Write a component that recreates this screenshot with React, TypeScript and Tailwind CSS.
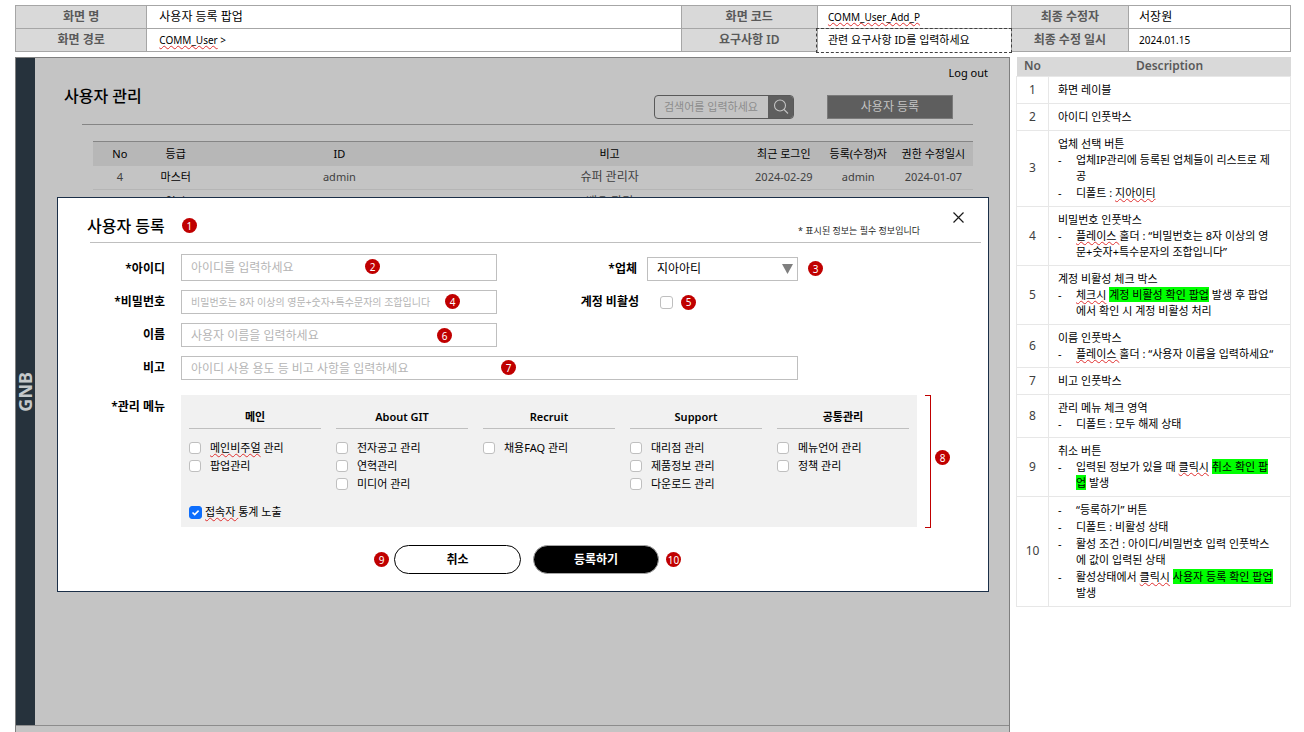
import React from "react";

function Badge({ n, className = "" }: { n: number; className?: string }) {
  return (
    <span
      className={`flex h-[15px] w-[15px] shrink-0 items-center justify-center rounded-full bg-[#c00000] text-[10px] leading-[14px] text-white ${className}`}
    >
      {n}
    </span>
  );
}

function Typo({ children }: { children: React.ReactNode }) {
  return (
    <span className="underline decoration-[#e03030] decoration-wavy decoration-1 underline-offset-1 [text-decoration-skip-ink:none]">
      {children}
    </span>
  );
}

function Mark({ children }: { children: React.ReactNode }) {
  return <mark className="bg-[#00ff00] text-black">{children}</mark>;
}

const metaLabel =
  "border border-[#a6a6a6] bg-[#d9d9d9] p-0 text-center text-[12px] font-semibold text-[#595959]";
const metaValue = "border border-[#a6a6a6] py-0 pr-0 text-left font-normal";

function MetaTable() {
  return (
    <table className="w-full table-fixed border-collapse leading-[16px]">
      <colgroup>
        <col className="w-[10.3%]" />
        <col className="w-[41.9%]" />
        <col className="w-[10.7%]" />
        <col className="w-[15.2%]" />
        <col className="w-[9.2%]" />
        <col className="w-[12.7%]" />
      </colgroup>
      <tbody>
        <tr className="h-[23px]">
          <th className={metaLabel}>화면 명</th>
          <td className={`${metaValue} pl-3 text-[12px]`}>사용자 등록 팝업</td>
          <th className={metaLabel}>화면 코드</th>
          <td className={`${metaValue} pl-[10px] text-[10px]`}>
            <Typo>COMM_User_Add_P</Typo>
          </td>
          <th className={metaLabel}>최종 수정자</th>
          <td className={`${metaValue} pl-[10px] text-[12px]`}>서장원</td>
        </tr>
        <tr className="h-[23px]">
          <th className={metaLabel}>화면 경로</th>
          <td className={`${metaValue} pl-3 text-[10px]`}>
            <Typo>COMM_User</Typo> &gt;
          </td>
          <th className={metaLabel}>요구사항 ID</th>
          <td className="bg-white py-0 pl-[10px] text-[11px] outline outline-1 outline-dashed outline-[#404040]">
            관련 요구사항 ID를 입력하세요
          </td>
          <th className={metaLabel}>최종 수정 일시</th>
          <td className={`${metaValue} pl-[10px] text-[10px]`}>2024.01.15</td>
        </tr>
      </tbody>
    </table>
  );
}

const users = [
  ["4", "마스터", "admin", "슈퍼 관리자", "2024-02-29", "admin", "2024-01-07"],
  ["3", "일반", "user", "배우 관리", "", "admin", ""],
];

function UserListPage() {
  return (
    <div className="min-w-0 flex-1">
      <div className="flex justify-end pt-[7px] pr-[21px]">
        <a href="#logout" className="text-[11px] leading-[16px] text-black">
          Log out
        </a>
      </div>
      <div className="flex h-[43px] items-end pr-[56px] pl-[29px]">
        <h1 className="flex-1 pb-[18px] text-[16px] leading-[20px] font-medium">사용자 관리</h1>
        <div className="mb-[5px] flex h-6 w-[140px] overflow-hidden rounded-[4px] border border-[#595959]">
          <input
            aria-label="검색어"
            placeholder="검색어를 입력하세요"
            className="min-w-0 flex-1 bg-transparent pl-[9px] text-[11px] outline-none placeholder:text-[#8c8c8c]"
          />
          <button aria-label="검색" className="flex w-[25px] items-center justify-center bg-[#5e5e5e]">
            <svg width="16" height="16" viewBox="0 0 16 16" fill="none" stroke="#c4c4c4" strokeWidth="1.1">
              <circle cx="7" cy="6.5" r="5.5" />
              <path d="M11 10.5L15 14.5" />
            </svg>
          </button>
        </div>
        <button className="mb-[5px] ml-[33px] h-6 w-[126px] border border-[#7a7a7a] bg-[#5e5e5e] text-[12px] text-[#c4c4c4]">
          사용자 등록
        </button>
      </div>
      <div className="mr-9 ml-[47px] border-t border-[#858585]" />
      <div className="mt-4 mr-9 ml-[58px]">
        <table className="w-full table-fixed border-collapse text-center text-[11px] leading-[16px]">
          <colgroup>
            <col className="w-[6.1%]" />
            <col className="w-[6.6%]" />
            <col className="w-[30.6%]" />
            <col className="w-[30.8%]" />
            <col className="w-[8.8%]" />
            <col className="w-[8.1%]" />
            <col className="w-[9%]" />
          </colgroup>
          <thead>
            <tr className="h-6 border-t border-[#858585] bg-[#b7b7b7] text-black">
              {["No", "등급", "ID", "비고", "최근 로그인", "등록(수정)자", "권한 수정일시"].map((h) => (
                <th key={h} className="p-0 font-normal whitespace-nowrap">
                  {h}
                </th>
              ))}
            </tr>
          </thead>
          <tbody>
            {users.map((row) => (
              <tr key={row[0]} className="h-6 border-b border-[#b5b5b5] text-[#404040]">
                {row.map((cell, i) => (
                  <td
                    key={i}
                    className={
                      i === 1 ? "p-0 whitespace-nowrap text-black" : i === 3 ? "p-0 text-[12px] whitespace-nowrap" : "p-0 whitespace-nowrap"
                    }
                  >
                    {cell}
                  </td>
                ))}
              </tr>
            ))}
          </tbody>
        </table>
      </div>
    </div>
  );
}

const labelCls = "w-[107px] shrink-0 text-right text-[12px] leading-[16px] font-semibold";
const inputCls =
  "w-full border border-[#bfbfbf] bg-white pl-[9px] outline-none placeholder:text-[#b5b5b5]";
const checkCls =
  "shrink-0 appearance-none rounded-[3px] border border-[#bfbfbf] bg-white checked:border-[#0d6efd] checked:bg-[#0d6efd]";

const menus: { title: string; items: React.ReactNode[] }[] = [
  { title: "메인", items: [<><Typo>메인비주얼</Typo> 관리</>, "팝업관리"] },
  { title: "About GIT", items: ["전자공고 관리", "연혁관리", "미디어 관리"] },
  { title: "Recruit", items: ["채용FAQ 관리"] },
  { title: "Support", items: ["대리점 관리", "제품정보 관리", "다운로드 관리"] },
  { title: "공통관리", items: ["메뉴언어 관리", "정책 관리"] },
];

function MenuPermissions() {
  return (
    <div className="relative h-[132px] min-w-0 flex-1 bg-[#f1f1f1] px-2 pt-3">
      <div className="grid h-[97px] grid-cols-5 gap-[15px]">
        {menus.map((m) => (
          <fieldset key={m.title} className="min-w-0">
            <legend className="mb-[11px] block w-full border-b border-[#bfbfbf] pt-[2px] pb-[3px] text-center text-[11px] leading-[16px] font-semibold">
              {m.title}
            </legend>
            <div className="flex flex-col gap-[2px]">
              {m.items.map((item, i) => (
                <label key={i} className="flex items-center gap-[9px] text-[11px] leading-[16px] whitespace-nowrap">
                  <input type="checkbox" className={`${checkCls} h-3 w-3`} />
                  <span>{item}</span>
                </label>
              ))}
            </div>
          </fieldset>
        ))}
      </div>
      <label className="flex items-center gap-[3px] text-[11px] leading-[16px]">
        <span className="relative flex">
          <input type="checkbox" defaultChecked className={`${checkCls} h-[13px] w-[13px]`} />
          <svg className="pointer-events-none absolute inset-0" width="13" height="13" viewBox="0 0 13 13" fill="none" stroke="white" strokeWidth="1.6">
            <path d="M3.5 6.5L5.7 8.6L9.6 4.6" />
          </svg>
        </span>
        <span>
          <Typo>접속자 </Typo>통계 노출
        </span>
      </label>
      <span className="absolute top-0 -right-[14px] h-[133px] w-[6px] border border-l-0 border-[#c00000]" />
      <Badge n={8} className="absolute top-[55px] -right-[33px]" />
    </div>
  );
}

function RegisterDialog() {
  return (
    <div
      role="dialog"
      aria-labelledby="dialog-title"
      className="absolute top-[139px] right-5 left-[41px] border border-[#1b2f48] bg-white pb-[17px]"
    >
      <header className="mr-[7px] ml-8 flex h-[45px] items-start border-b border-[#bfbfbf]">
        <h2 id="dialog-title" className="-ml-[3px] pt-[18px] text-[16px] leading-[20px] font-medium">
          사용자 등록
        </h2>
        <Badge n={1} className="mt-5 ml-[17px]" />
        <p className="ml-auto pt-[26px] text-[9px] leading-[13px] text-[#262626]">* 표시된 정보는 필수 정보입니다</p>
        <button aria-label="닫기" className="mt-[14px] mr-[17px] ml-[33px]">
          <svg width="11" height="11" viewBox="0 0 11 11" stroke="#1a1a1a" strokeWidth="1.2">
            <path d="M0.5 0.5L10.5 10.5M10.5 0.5L0.5 10.5" />
          </svg>
        </button>
      </header>

      <form className="mt-[11px]" onSubmit={(e) => e.preventDefault()}>
        <div className="mr-[190px] flex flex-col gap-[9px]">
          <div className="flex items-end gap-4">
            <label htmlFor="uid" className={`${labelCls} pb-1`}>*아이디</label>
            <div className="relative flex-1">
              <input id="uid" placeholder="아이디를 입력하세요" className={`${inputCls} block h-[27px] text-[12px]`} />
              <Badge n={2} className="absolute top-[5px] right-[117px]" />
            </div>
            <div className="-ml-4 flex w-[301px] items-center gap-[10px]">
              <label htmlFor="company" className="flex-1 text-right text-[12px] leading-[16px] font-semibold">*업체</label>
              <div className="relative w-[151px]">
                <select id="company" className="block h-6 w-full appearance-none border border-[#bfbfbf] bg-white pl-[9px] text-[12px] outline-none">
                  <option>지아아티</option>
                </select>
                <svg className="pointer-events-none absolute top-[7px] right-[5px]" width="11" height="10" viewBox="0 0 11 10" fill="#7f7f7f">
                  <path d="M0 0H11L5.5 10Z" />
                </svg>
                <Badge n={3} className="absolute top-1 -right-[25px]" />
              </div>
            </div>
          </div>
          <div className="flex items-center gap-4">
            <label htmlFor="pw" className={labelCls}>*비밀번호</label>
            <div className="relative flex-1">
              <input
                id="pw"
                type="text"
                placeholder="비밀번호는 8자 이상의 영문+숫자+특수문자의 조합입니다"
                className={`${inputCls} block h-6 text-[10px]`}
              />
              <Badge n={4} className="absolute top-1 right-[37px]" />
            </div>
            <div className="-ml-4 flex w-[301px] items-center">
              <label htmlFor="inactive" className="w-[142px] text-right text-[12px] leading-[16px] font-semibold">계정 비활성</label>
              <input id="inactive" type="checkbox" className={`${checkCls} ml-[21px] h-[13px] w-[13px]`} />
              <Badge n={5} className="ml-2" />
            </div>
          </div>
          <div className="flex items-center gap-4">
            <label htmlFor="name" className={labelCls}>이름</label>
            <div className="relative mr-[301px] flex-1">
              <input id="name" placeholder="사용자 이름을 입력하세요" className={`${inputCls} block h-6 text-[12px]`} />
              <Badge n={6} className="absolute top-[5px] right-[45px]" />
            </div>
          </div>
          <div className="flex items-center gap-4">
            <label htmlFor="memo" className={labelCls}>비고</label>
            <div className="relative flex-1">
              <input id="memo" placeholder="아이디 사용 용도 등 비고 사항을 입력하세요" className={`${inputCls} block h-6 text-[12px]`} />
              <Badge n={7} className="absolute top-1 left-[320px]" />
            </div>
          </div>
        </div>

        <div className="mt-[15px] mr-[71px] flex items-start gap-4">
          <span className={`${labelCls} pt-1`}>*관리 메뉴</span>
          <MenuPermissions />
        </div>

        <div className="mt-[18px] flex items-center justify-center pl-[9px] text-[12px] font-semibold">
          <Badge n={9} className="mr-[5px] font-normal" />
          <button type="button" className="h-[29px] w-[127px] rounded-full border border-black bg-white">취소</button>
          <button type="submit" className="ml-3 h-[29px] w-[126px] rounded-full border border-[#a6a6a6] bg-black text-white">등록하기</button>
          <Badge n={10} className="ml-[7px] font-normal" />
        </div>
      </form>
    </div>
  );
}

const notes: { title?: string; items?: React.ReactNode[] }[] = [
  { title: "화면 레이블" },
  { title: "아이디 인풋박스" },
  {
    title: "업체 선택 버튼",
    items: ["업체IP관리에 등록된 업체들이 리스트로 제공", <>디폴트 : <Typo>지아이티</Typo></>],
  },
  {
    title: "비밀번호 인풋박스",
    items: [<><Typo>플레이스 </Typo>홀더 : “비밀번호는 8자 이상의 영문+숫자+특수문자의 조합입니다”</>],
  },
  {
    title: "계정 비활성 체크 박스",
    items: [<><Typo>체크시</Typo> <Mark>계정 비활성 확인 팝업</Mark> 발생 후 팝업에서 확인 시 계정 비활성 처리</>],
  },
  { title: "이름 인풋박스", items: [<><Typo>플레이스 </Typo>홀더 : “사용자 이름을 입력하세요“</>] },
  { title: "비고 인풋박스" },
  { title: "관리 메뉴 체크 영역", items: ["디폴트 : 모두 해제 상태"] },
  {
    title: "취소 버튼",
    items: [<>입력된 정보가 있을 때 <Typo>클릭시</Typo> <Mark>취소 확인 팝업</Mark> 발생</>],
  },
  {
    items: [
      "“등록하기” 버튼",
      "디폴트 : 비활성 상태",
      "활성 조건 : 아이디/비밀번호 입력 인풋박스에 값이 입력된 상태",
      <>활성상태에서 <Typo>클릭시</Typo> <Mark>사용자 등록 확인 팝업</Mark> 발생</>,
    ],
  },
];

function DescriptionTable() {
  return (
    <table className="w-full table-fixed border-collapse text-[11px] leading-[16px]">
      <thead>
        <tr className="h-[19px] bg-[#d9d9d9] text-[12px] text-[#595959]">
          <th className="w-8 p-0 font-semibold">No</th>
          <th className="p-0 font-semibold">Description</th>
        </tr>
      </thead>
      <tbody>
        {notes.map((note, i) => (
          <tr key={i}>
            <td className="border border-[#e7e7e7] p-0 text-center text-[12px] text-[#404040]">{i + 1}</td>
            <td className="border border-[#e7e7e7] py-[5px] pr-[13px] pl-[9px] break-all">
              {note.title && <p>{note.title}</p>}
              {note.items && (
                <ul className="flex flex-col gap-px">
                  {note.items.map((item, j) => (
                    <li key={j} className="flex">
                      <span className="w-[18px] shrink-0">-</span>
                      <span>{item}</span>
                    </li>
                  ))}
                </ul>
              )}
            </td>
          </tr>
        ))}
      </tbody>
    </table>
  );
}

export default function App() {
  return (
    <div className="flex h-screen flex-col overflow-hidden bg-white pt-[5px] pr-[13px] pl-[15px] font-['Noto_Sans','Noto_Sans_CJK_KR',sans-serif] text-black">
      <MetaTable />
      <div className="mt-[5px] flex min-h-0 flex-1 gap-[6px]">
        <main className="relative flex min-w-0 flex-1 flex-col border border-b-0 border-[#7f7f7f] bg-[#c4c4c4]">
          <div className="flex flex-1 border-b border-[#8c8c8c]">
            <nav className="flex w-[19px] items-center justify-center bg-[#26323c]">
              <span className="rotate-180 text-[18px] leading-[19px] font-bold text-[#c4c8ca] [writing-mode:vertical-rl]">
                GNB
              </span>
            </nav>
            <UserListPage />
          </div>
          <div className="h-[6px]" />
          <RegisterDialog />
        </main>
        <aside className="w-[275px] shrink-0">
          <DescriptionTable />
        </aside>
      </div>
    </div>
  );
}
